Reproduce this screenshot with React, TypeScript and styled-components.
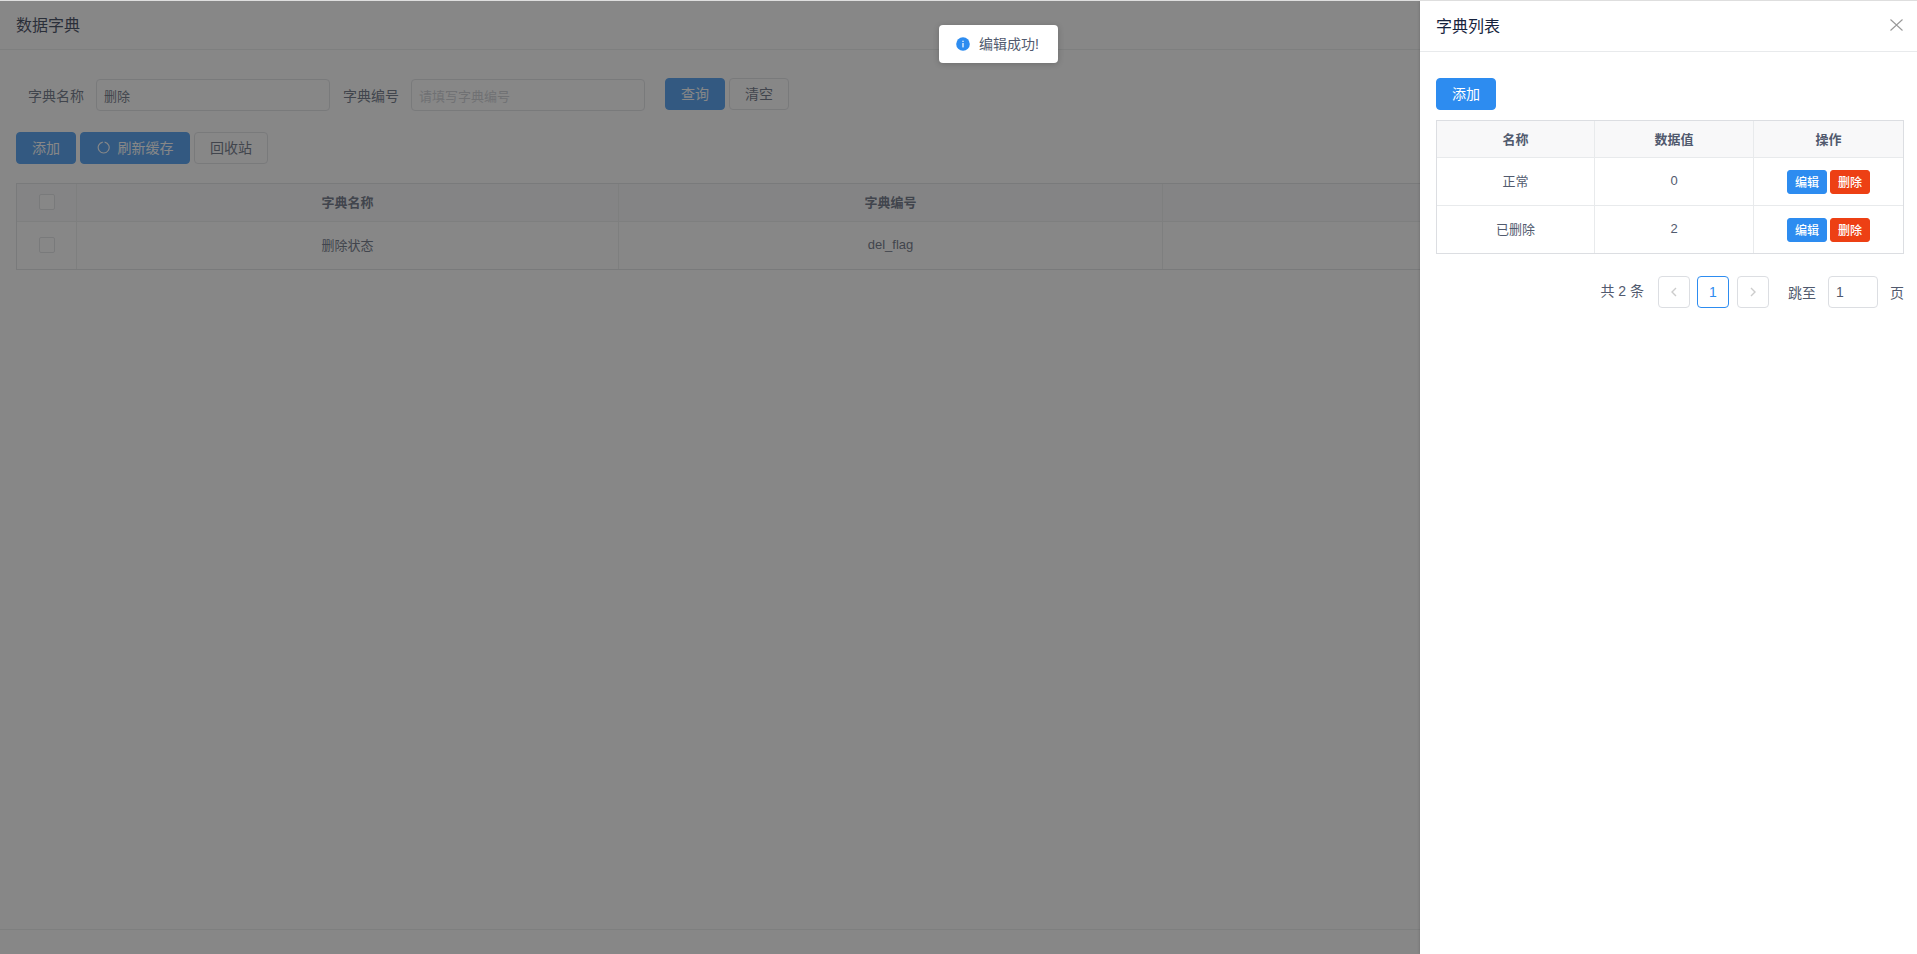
import React from "react";
import styled, { createGlobalStyle } from "styled-components";

const Global = createGlobalStyle`
  html, body { margin: 0; padding: 0; height: 100%; background: #fff; overflow: hidden; }
  * { box-sizing: border-box; }
  body {
    font-family: "Liberation Sans", "Noto Sans CJK SC", sans-serif;
    font-size: 14px;
    color: #515a6e;
  }
`;

const Stage = styled.div`
  position: relative;
  height: 954px;
  border-top: 1px solid #dedede;
  overflow: hidden;
  display: flex;
  flex-direction: column;
`;

const PageHeader = styled.header`
  height: 49px;
  flex: none;
  display: flex;
  align-items: center;
  padding: 0 0 3px 16px;
  border-bottom: 1px solid #e8eaec;
  font-size: 16px;
  color: #17233d;
`;

const Content = styled.main`
  flex: 1;
  padding: 28px 16px 0;
`;

const Filter = styled.div`
  display: flex;
  align-items: flex-start;
  height: 32px;
  padding-left: 12px;
`;

const FieldLabel = styled.label`
  width: 68px;
  height: 33px;
  display: flex;
  align-items: center;
  font-size: 14px;
  color: #515a6e;
`;

const TextInput = styled.div<{ $w?: number; $ph?: boolean }>`
  width: ${(p) => p.$w ?? 234}px;
  height: 32px;
  margin-top: 1px;
  flex: none;
  display: flex;
  align-items: center;
  padding: 0 7px;
  border: 1px solid #dcdee2;
  border-radius: 4px;
  background: #fff;
  font-size: 13px;
  color: ${(p) => (p.$ph ? "#c5c8ce" : "#515a6e")};
`;

const Gap = styled.span<{ $w: number }>`
  flex: none;
  width: ${(p) => p.$w}px;
`;

const Button = styled.button<{ $tone?: "primary" | "danger" | "plain"; $w?: number; $small?: boolean }>`
  flex: none;
  width: ${(p) => (p.$w ? `${p.$w}px` : "auto")};
  height: ${(p) => (p.$small ? 24 : 32)}px;
  padding: 0 0 ${(p) => (p.$small ? 0 : 2)}px;
  display: inline-flex;
  align-items: center;
  justify-content: center;
  gap: 8px;
  border-radius: ${(p) => (p.$small ? 3 : 4)}px;
  border: 1px solid
    ${(p) => (p.$tone === "primary" ? "#2d8cf0" : p.$tone === "danger" ? "#ed4014" : "#dcdee2")};
  background: ${(p) => (p.$tone === "primary" ? "#2d8cf0" : p.$tone === "danger" ? "#ed4014" : "#fff")};
  color: ${(p) => (p.$tone === "primary" || p.$tone === "danger" ? "#fff" : "#515a6e")};
  font-family: inherit;
  font-size: ${(p) => (p.$small ? 12 : 14)}px;
  font-weight: ${(p) => (p.$small ? 500 : 400)};
`;

const ButtonRow = styled.div<{ $gap: number; $top?: number }>`
  display: flex;
  align-items: center;
  gap: ${(p) => p.$gap}px;
  margin-top: ${(p) => p.$top ?? 0}px;
`;

const BigTable = styled.div`
  margin-top: 19px;
  width: 1885px;
  border: 1px solid #dcdee2;
  display: grid;
  grid-template-columns: 60px 542px 544px 543px 1fr;
  grid-template-rows: 38px 47px;
  font-size: 13px;
`;

const BigCell = styled.div<{ $head?: boolean; $last?: boolean }>`
  display: flex;
  align-items: center;
  justify-content: center;
  padding-bottom: 2px;
  background: ${(p) => (p.$head ? "#f8f8f9" : "#fff")};
  border-right: ${(p) => (p.$last ? "none" : "1px solid #e8eaec")};
  border-bottom: ${(p) => (p.$head ? "1px solid #e8eaec" : "none")};
  font-weight: ${(p) => (p.$head ? 600 : 400)};
  color: #515a6e;
`;

const Check = styled.span`
  width: 16px;
  height: 16px;
  margin-left: 1px;
  border: 1px solid #dcdee2;
  border-radius: 2px;
  background: #fff;
`;

const Footer = styled.footer`
  height: 25px;
  flex: none;
  border-top: 1px solid #e8eaec;
`;

const Mask = styled.div`
  position: absolute;
  inset: 0;
  background: rgba(55, 55, 55, 0.6);
`;

const Drawer = styled.aside`
  position: absolute;
  top: 0;
  right: 0;
  bottom: 0;
  width: 497px;
  background: #fff;
  box-shadow: 0 0 3px rgba(0, 0, 0, 0.2);
  display: flex;
  flex-direction: column;
`;

const DrawerHeader = styled.div`
  height: 51px;
  flex: none;
  display: flex;
  align-items: center;
  justify-content: space-between;
  padding: 0 14px 3px 16px;
  border-bottom: 1px solid #e8eaec;
  font-size: 16px;
  color: #17233d;
`;

const CloseIcon = styled.svg`
  display: block;
  width: 13px;
  height: 12px;
  margin-top: 1px;
  stroke: #999;
  stroke-width: 1.1;
  fill: none;
`;

const DrawerBody = styled.div`
  padding: 26px 13px 0 16px;
`;

const SmallTable = styled.div`
  margin-top: 10px;
  border: 1px solid #dcdee2;
  display: grid;
  grid-template-columns: 158px 159px 1fr;
  grid-template-rows: 37px 48px 47px;
  font-size: 13px;
`;

const SmallCell = styled.div<{ $head?: boolean; $last?: boolean; $end?: boolean }>`
  display: flex;
  align-items: center;
  justify-content: center;
  gap: 3px;
  padding-bottom: ${(p) => (p.$head ? 2 : 0)}px;
  background: ${(p) => (p.$head ? "#f8f8f9" : "#fff")};
  border-right: ${(p) => (p.$last ? "none" : "1px solid #e8eaec")};
  border-bottom: ${(p) => (p.$end ? "none" : "1px solid #e8eaec")};
  font-weight: ${(p) => (p.$head ? 600 : 400)};
  color: #515a6e;
`;

const SmallCellText = styled.span`
  margin-top: -2px;
`;

const Pager = styled.div`
  display: flex;
  justify-content: flex-end;
  align-items: center;
  margin-top: 22px;
  font-size: 14px;
  color: #515a6e;
`;

const PageTotal = styled.span`
  margin-right: 14px;
  margin-top: -4px;
`;

const PageItem = styled.div<{ $active?: boolean; $mr?: number }>`
  width: 32px;
  height: 32px;
  margin-right: ${(p) => p.$mr ?? 7}px;
  display: flex;
  align-items: center;
  justify-content: center;
  border: 1px solid ${(p) => (p.$active ? "#2d8cf0" : "#dcdee2")};
  border-radius: 4px;
  color: ${(p) => (p.$active ? "#2d8cf0" : "#ccc")};
  font-size: 14px;
`;

const PageInput = styled.div`
  width: 50px;
  height: 32px;
  margin: 0 12px;
  display: flex;
  align-items: center;
  padding-left: 7px;
  border: 1px solid #dcdee2;
  border-radius: 4px;
  font-size: 14px;
`;

const Toast = styled.div`
  position: absolute;
  top: 24px;
  left: 939px;
  width: 119px;
  height: 38px;
  display: flex;
  align-items: center;
  gap: 9px;
  padding: 0 0 0 17px;
  background: #fff;
  border-radius: 4px;
  box-shadow: 0 1px 6px rgba(0, 0, 0, 0.2);
  font-size: 14px;
  color: #515a6e;
`;

const ToastText = styled.span`
  margin-top: -2px;
`;

const Spinner = () => (
  <svg width="13" height="13" viewBox="0 0 14 14" fill="none" stroke="#fff" strokeWidth="1.2">
    <path d="M8.2 1.2 A5.9 5.9 0 1 1 6.2 1.2" />
  </svg>
);

const Chevron = ({ dir }: { dir: "left" | "right" }) => (
  <svg width="12" height="12" viewBox="0 0 12 12" fill="none" stroke="#ccc" strokeWidth="1.4">
    <path d={dir === "left" ? "M8 2 L4 6 L8 10" : "M4 2 L8 6 L4 10"} />
  </svg>
);

const InfoIcon = () => (
  <svg width="14" height="14" viewBox="0 0 14 14">
    <circle cx="7" cy="7" r="6.8" fill="#2d8cf0" />
    <rect x="6.4" y="6" width="1.2" height="4.4" fill="#fff" />
    <rect x="6.4" y="3.7" width="1.2" height="1.3" fill="#fff" />
  </svg>
);

export default function App() {
  return (
    <>
      <Global />
      <Stage>
        <PageHeader>数据字典</PageHeader>
        <Content>
          <Filter>
            <FieldLabel>字典名称</FieldLabel>
            <TextInput>删除</TextInput>
            <Gap $w={13} />
            <FieldLabel>字典编号</FieldLabel>
            <TextInput $ph>请填写字典编号</TextInput>
            <Gap $w={20} />
            <ButtonRow $gap={4}>
              <Button $tone="primary" $w={60}>查询</Button>
              <Button $w={60}>清空</Button>
            </ButtonRow>
          </Filter>
          <ButtonRow $gap={4} $top={22}>
            <Button $tone="primary" $w={60}>添加</Button>
            <Button $tone="primary" $w={110}><Spinner />刷新缓存</Button>
            <Button $w={74}>回收站</Button>
          </ButtonRow>
          <BigTable>
            <BigCell $head><Check /></BigCell>
            <BigCell $head>字典名称</BigCell>
            <BigCell $head>字典编号</BigCell>
            <BigCell $head>备注</BigCell>
            <BigCell $head $last>操作</BigCell>
            <BigCell><Check /></BigCell>
            <BigCell>删除状态</BigCell>
            <BigCell>del_flag</BigCell>
            <BigCell />
            <BigCell $last />
          </BigTable>
        </Content>
        <Footer />
        <Mask />
        <Drawer>
          <DrawerHeader>
            字典列表
            <CloseIcon viewBox="0 0 13 12"><path d="M0.5 0.5 L12.5 11.5 M12.5 0.5 L0.5 11.5" /></CloseIcon>
          </DrawerHeader>
          <DrawerBody>
            <Button $tone="primary" $w={60}>添加</Button>
            <SmallTable>
              <SmallCell $head>名称</SmallCell>
              <SmallCell $head>数据值</SmallCell>
              <SmallCell $head $last>操作</SmallCell>
              <SmallCell><SmallCellText>正常</SmallCellText></SmallCell>
              <SmallCell><SmallCellText>0</SmallCellText></SmallCell>
              <SmallCell $last>
                <Button $tone="primary" $small $w={40}>编辑</Button>
                <Button $tone="danger" $small $w={40}>删除</Button>
              </SmallCell>
              <SmallCell $end><SmallCellText>已删除</SmallCellText></SmallCell>
              <SmallCell $end><SmallCellText>2</SmallCellText></SmallCell>
              <SmallCell $end $last>
                <Button $tone="primary" $small $w={40}>编辑</Button>
                <Button $tone="danger" $small $w={40}>删除</Button>
              </SmallCell>
            </SmallTable>
            <Pager>
              <PageTotal>共 2 条</PageTotal>
              <PageItem><Chevron dir="left" /></PageItem>
              <PageItem $active $mr={8}>1</PageItem>
              <PageItem $mr={19}><Chevron dir="right" /></PageItem>
              跳至
              <PageInput>1</PageInput>
              页
            </Pager>
          </DrawerBody>
        </Drawer>
        <Toast><InfoIcon /><ToastText>编辑成功!</ToastText></Toast>
      </Stage>
    </>
  );
}
